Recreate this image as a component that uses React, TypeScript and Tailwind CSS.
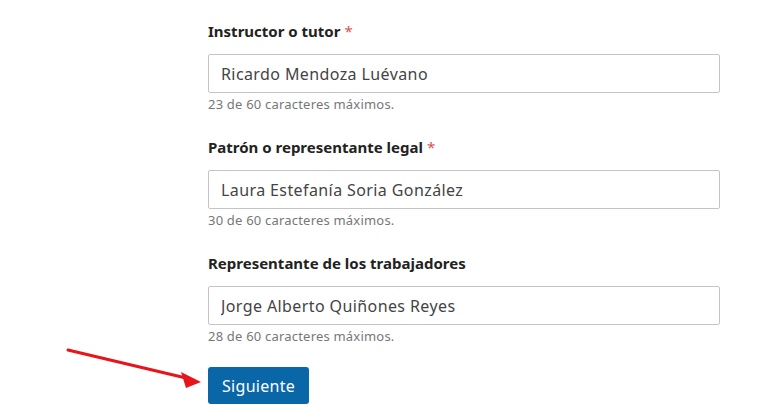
import React from "react";

interface FieldProps {
  label: string;
  value: string;
  required?: boolean;
  max?: number;
}

const Field: React.FC<FieldProps> = ({ label, value, required, max = 60 }) => {
  return (
    <div className="flex flex-col">
      <label className="text-[15px] font-bold text-[#222] leading-5 mb-[13px]">
        {label}
        {required && <span className="text-[#d9534f] font-normal ml-1">*</span>}
      </label>
      <input
        type="text"
        defaultValue={value}
        className="w-[512px] h-[39px] border border-[#c4c4c4] rounded-[2px] px-3 text-[16px] tracking-[0.4px] text-[#444] outline-none"
      />
      <p className="text-[13px] tracking-[0.2px] text-[#777] mt-[3px] leading-4">
        {value.length} de {max} caracteres máximos.
      </p>
    </div>
  );
};

export default function App() {
  return (
    <div
      className="relative w-[767px] h-[420px] bg-white overflow-hidden"
      style={{ fontFamily: '"Noto Sans", "Open Sans", sans-serif' }}
    >
      <div className="flex flex-col gap-[25px] pl-[208px] pt-[21px]">
        <Field label="Instructor o tutor" value="Ricardo Mendoza Luévano" required />
        <Field label="Patrón o representante legal" value="Laura Estefanía Soria González" required />
        <Field label="Representante de los trabajadores" value="Jorge Alberto Quiñones Reyes" />
        <div>
          <button className="h-[37px] px-[14px] bg-[#0a67a7] text-white text-[16px] tracking-[0.3px] rounded-[3px] -mt-[2px]">
            Siguiente
          </button>
        </div>
      </div>

      {/* Red annotation arrow */}
      <svg className="absolute left-0 top-0" width="767" height="420">
        <line x1="68" y1="350" x2="186" y2="378" stroke="#e8141b" strokeWidth="3" strokeLinecap="round" />
        <polygon points="201,382 181,372 186,388" fill="#e8141b" />
      </svg>
    </div>
  );
}
